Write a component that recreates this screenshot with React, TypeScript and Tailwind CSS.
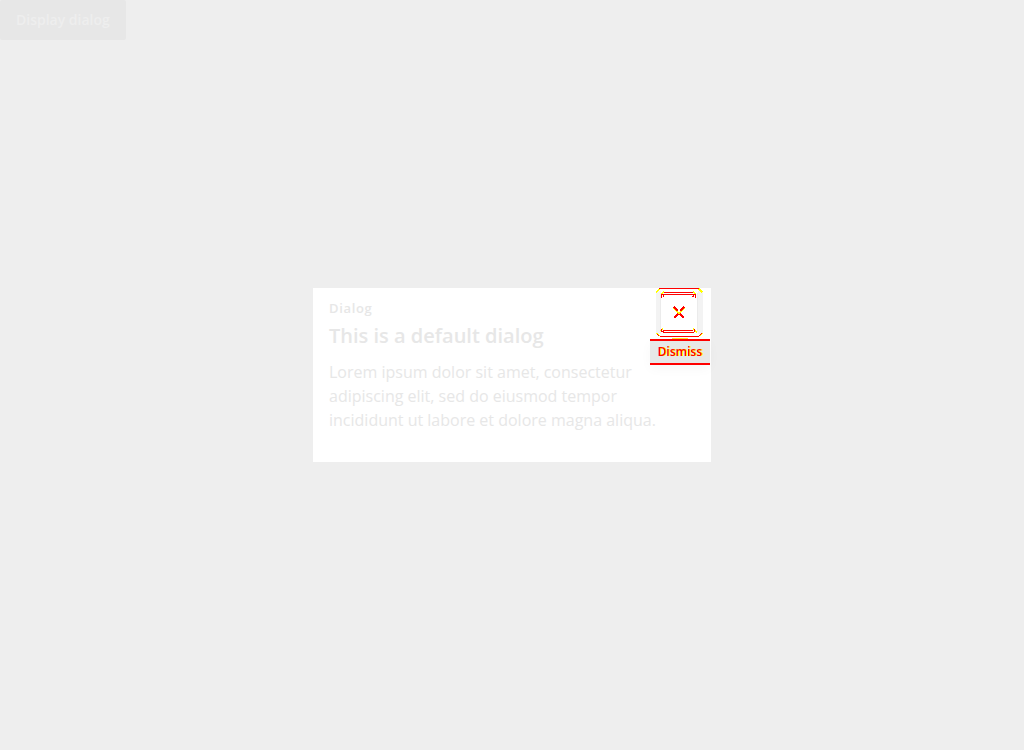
function CloseIcon() {
  return (
    <svg width="48" height="50" viewBox="0 0 48 50" shapeRendering="crispEdges" fill="none" aria-hidden="true">
      <path d="M4 2H43V48H4Z" fill="#fff" />
      <path d="M2 3V46M44.500 3V46" stroke="#f3f3f3" strokeWidth="5" />
      <path d="M4.500 5V44M41.500 5V44" stroke="#ebebeb" />
      <path d="M0 4.500L3.500 1M43 1L46.500 4.500M.5 45L3.500 48M43.500 48L46.500 45" stroke="#ff0" strokeWidth="1.500" />
      <path d="M3 .5H43M4 48.500H43M1.500 46.500L3.500 48.500M42.500 48.500L45.500 45.500" stroke="#f00" />
      <path d="M8 4.500H37M7 6.500H39M7 42.500H37M7 44.500H38" stroke="#f00" />
      <path d="M5 6L8 3.500M37 3.500L40 6M5 43L7 40.500M37 40.500L41 44" stroke="#ff0" strokeWidth="1.500" />
      <path d="M5.500 10V6M6 6.500H8M7 7L8.500 9.500M39.500 10V6M37 6.500H39M38 7L36.500 9.500M5.500 41V44M5 43.500H8M38.500 41V44" stroke="#f00" />
      <path d="M18 20L22 24M28 20L24 24M18 30L22 26M24 26L28 30" stroke="#ff0" strokeWidth="2" />
      <path d="M21 25H25" stroke="#ff0" strokeWidth="2" />
      <path d="M18 19L22 23M28 19L24 23M22 26L18 30M24 26L28 30" stroke="#f00" strokeWidth="1.500" />
    </svg>
  );
}

export default function App() {
  return (
    <main className="relative min-h-screen bg-[#eeeeee] font-['Open_Sans',sans-serif]">
      <button type="button" className="block h-10 rounded-[2px] bg-[#e7e7e7] px-4 text-sm font-semibold leading-5 text-[#eeeeee]">
        Display dialog
      </button>
      <div className="fixed inset-0 flex items-center justify-center">
        <section role="dialog" aria-labelledby="dialog-title" className="relative w-full max-w-[398px] bg-white px-4 pb-[30px] pt-3">
          <p className="text-[13px] font-semibold leading-4 tracking-wider text-[#e7e7e7]">Dialog</p>
          <h1 id="dialog-title" className="mt-2 text-xl font-semibold leading-6 text-[#e7e7e7]">This is a default dialog</h1>
          <p className="mt-3 max-w-[334px] text-base leading-6 text-[#e7e7e7]">
            Lorem ipsum dolor sit amet, consectetur adipiscing elit, sed do eiusmod tempor incididunt ut labore et dolore magna aliqua.
          </p>
          <div className="absolute right-px top-0 flex flex-col items-center">
            <button type="button" aria-labelledby="dismiss-label" className="h-[50px]">
              <CloseIcon />
            </button>
            <span className="h-px w-4 bg-yellow-300" />
            <span id="dismiss-label" role="tooltip" className="border-y-2 border-[#f00] bg-[#e7e7e7] px-2 text-xs font-semibold leading-[22px] text-[#f00] [text-shadow:1px_0_#ff0] shadow-[0_4px_12px_#00000008]">
              Dismiss
            </span>
          </div>
        </section>
      </div>
    </main>
  );
}
